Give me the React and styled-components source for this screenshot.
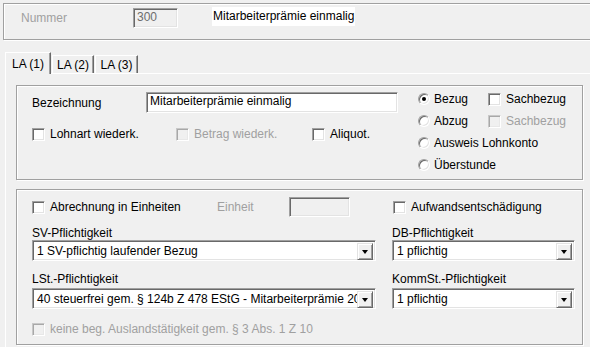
import React from "react";
import styled, { createGlobalStyle, css } from "styled-components";

const Global = createGlobalStyle`
  html, body { margin: 0; padding: 0; background: #f0f0f0; overflow: hidden; }
  body { font-family: "Liberation Sans", Arial, sans-serif; font-size: 12px; color: #000; }
`;

const sunken = css`
  border: 1px solid;
  border-color: #a0a0a0 #ffffff #ffffff #a0a0a0;
  box-shadow: inset 1px 1px 0 #696969, inset -1px -1px 0 #e3e3e3;
`;

const Page = styled.div`
  width: 590px;
  height: 347px;
  padding: 3px 0 0 3px;
  box-sizing: border-box;
  overflow: hidden;
`;

const Group = styled.div`
  box-sizing: border-box;
  border: 1px solid #a0a0a0;
  box-shadow: inset 1px 1px 0 #fff, 1px 1px 0 #fff;
  height: ${(p) => p.$h}px;
  width: ${(p) => (p.$w ? `${p.$w}px` : "auto")};
`;

const HeaderGroup = styled(Group)`
  margin-right: -20px;
  display: flex;
  align-items: flex-start;
  padding: 4px 0 0 17px;
`;

const Label = styled.span`
  display: inline-block;
  width: ${(p) => (p.$w ? `${p.$w}px` : "auto")};
  height: 20px;
  line-height: 20px;
  white-space: nowrap;
  color: ${(p) => (p.$disabled ? "#a0a0a0" : "#000")};
`;

const TextBox = styled.div`
  box-sizing: border-box;
  ${sunken};
  width: ${(p) => p.$w}px;
  height: ${(p) => p.$h}px;
  line-height: ${(p) => p.$h - 4}px;
  padding: 0 3px;
  background: ${(p) => (p.$disabled ? "#f0f0f0" : "#fff")};
  color: ${(p) => (p.$disabled ? "#6d6d6d" : "#000")};
  white-space: nowrap;
  overflow: hidden;
`;

const TitleText = styled.span`
  display: inline-block;
  margin: -1px 0 0 34px;
  height: 19px;
  line-height: 19px;
  padding: 0 1px;
  background: #fff;
  white-space: nowrap;
`;

const TabRow = styled.div`
  display: flex;
  align-items: flex-end;
  margin: 12px 0 0 2px;
  height: 21px;
`;

const Tab = styled.div`
  box-sizing: border-box;
  position: relative;
  z-index: ${(p) => (p.$active ? 2 : 1)};
  width: ${(p) => p.$w}px;
  height: ${(p) => (p.$active ? 22 : 18)}px;
  margin-bottom: ${(p) => (p.$active ? -1 : 0)}px;
  margin-right: 1px;
  background: #f0f0f0;
  border-top: 1px solid #fff;
  border-left: 1px solid #fff;
  border-right: 1px solid #696969;
  box-shadow: inset -1px 0 0 #a0a0a0;
  display: flex;
  justify-content: center;
  padding-top: ${(p) => (p.$active ? 4 : 2)}px;
  line-height: 14px;
`;

const Panel = styled.div`
  margin-left: 2px;
  border-top: 1px solid #fff;
  border-left: 1px solid #fff;
  padding: 11px 0 0 10px;
  height: 300px;
  display: flex;
  flex-direction: column;
  gap: 9px;
`;

const GroupInner = styled(Group)`
  display: flex;
  flex-direction: ${(p) => (p.$col ? "column" : "row")};
  padding-left: 15px;
`;

const LeftCol = styled.div`
  display: flex;
  flex-direction: column;
  padding-top: 6px;
`;

const Row = styled.div`
  display: flex;
  align-items: center;
  height: ${(p) => p.$h || 20}px;
  margin-top: ${(p) => p.$mt || 0}px;
`;

const RadioCol = styled.div`
  display: grid;
  grid-template-columns: 70px auto;
  grid-auto-rows: 22px;
  padding-top: 2px;
  margin-left: 20px;
`;

const Item = styled.label`
  display: flex;
  align-items: center;
  gap: ${(p) => (p.$radio ? 4 : 5)}px;
  width: ${(p) => (p.$w ? `${p.$w}px` : "auto")};
  margin-left: ${(p) => p.$ml || 0}px;
  white-space: nowrap;
  color: ${(p) => (p.$disabled ? "#a0a0a0" : "#000")};
  grid-column: ${(p) => (p.$span ? "1 / span 2" : "auto")};
`;

const Box = styled.span`
  box-sizing: border-box;
  width: 13px;
  height: 13px;
  flex: none;
  ${sunken};
  background: ${(p) => (p.$disabled ? "#f0f0f0" : "#fff")};
  ${(p) =>
    p.$disabled &&
    css`
      border-color: #c8c8c8 #fff #fff #c8c8c8;
      box-shadow: inset 1px 1px 0 #a8a8a8, inset -1px -1px 0 #e8e8e8;
    `}
`;

const Radio = styled.span`
  box-sizing: border-box;
  width: 12px;
  height: 12px;
  flex: none;
  border-radius: 50%;
  border: 1px solid;
  border-color: #a0a0a0 #fff #fff #a0a0a0;
  box-shadow: inset 1px 1px 0 #696969, inset -1px -1px 0 #e3e3e3;
  background: #fff;
  display: flex;
  align-items: center;
  justify-content: center;
  &::after {
    content: "";
    display: ${(p) => (p.$on ? "block" : "none")};
    width: 4px;
    height: 4px;
    border-radius: 50%;
    background: #000;
  }
`;

const FieldGrid = styled.div`
  display: grid;
  grid-template-columns: 344px 183px;
  column-gap: 16px;
`;

const FieldLabel = styled.div`
  height: 14px;
  line-height: 14px;
  margin-top: ${(p) => p.$mt || 0}px;
  white-space: nowrap;
`;

const Combo = styled.div`
  box-sizing: border-box;
  ${sunken};
  height: 21px;
  margin-top: ${(p) => p.$mt || 0}px;
  background: #fff;
  display: flex;
  padding: 2px;
`;

const ComboText = styled.div`
  flex: 1;
  min-width: 0;
  overflow: hidden;
  white-space: nowrap;
  line-height: 17px;
  padding-left: 2px;
`;

const ComboButton = styled.div`
  box-sizing: border-box;
  width: 16px;
  height: 17px;
  flex: none;
  background: #f0f0f0;
  border: 1px solid;
  border-color: #e3e3e3 #696969 #696969 #e3e3e3;
  box-shadow: inset 1px 1px 0 #fff, inset -1px -1px 0 #a0a0a0;
  display: flex;
  align-items: center;
  justify-content: center;
  &::after {
    content: "";
    width: 0;
    height: 0;
    border-left: 3.5px solid transparent;
    border-right: 3.5px solid transparent;
    border-top: 4px solid #000;
  }
`;

const Check = ({ children, disabled, w, ml }) => (
  <Item $disabled={disabled} $w={w} $ml={ml}>
    <Box $disabled={disabled} />
    {children}
  </Item>
);

const RadioItem = ({ children, on, span }) => (
  <Item $radio $span={span}>
    <Radio $on={on} />
    {children}
  </Item>
);

const Select = ({ value, mt }) => (
  <Combo $mt={mt}>
    <ComboText>{value}</ComboText>
    <ComboButton />
  </Combo>
);

export default function App() {
  return (
    <>
      <Global />
      <Page>
        <HeaderGroup $h={37}>
          <Label $w={112} $disabled>
            Nummer
          </Label>
          <TextBox $w={45} $h={20} $disabled>
            300
          </TextBox>
          <TitleText>Mitarbeiterprämie einmalig</TitleText>
        </HeaderGroup>

        <TabRow>
          <Tab $w={46} $active>
            LA (1)
          </Tab>
          <Tab $w={42}>LA (2)</Tab>
          <Tab $w={43}>LA (3)</Tab>
        </TabRow>

        <Panel>
          <GroupInner $h={95} $w={567}>
            <LeftCol>
              <Row $h={21}>
                <Label $w={114}>Bezeichnung</Label>
                <TextBox $w={252} $h={21}>
                  Mitarbeiterprämie einmalig
                </TextBox>
              </Row>
              <Row $h={14} $mt={14}>
                <Check w={144}>Lohnart wiederk.</Check>
                <Check w={136} disabled>
                  Betrag wiederk.
                </Check>
                <Check>Aliquot.</Check>
              </Row>
            </LeftCol>
            <RadioCol>
              <RadioItem on>Bezug</RadioItem>
              <Check>Sachbezug</Check>
              <RadioItem>Abzug</RadioItem>
              <Check disabled>Sachbezug</Check>
              <RadioItem span>Ausweis Lohnkonto</RadioItem>
              <RadioItem span>Überstunde</RadioItem>
            </RadioCol>
          </GroupInner>

          <GroupInner $h={156} $w={567} $col>
            <Row $h={20} $mt={7}>
              <Check w={185}>Abrechnung in Einheiten</Check>
              <Label $w={72} $disabled>
                Einheit
              </Label>
              <TextBox $w={61} $h={20} $disabled />
              <Check ml={43}>Aufwandsentschädigung</Check>
            </Row>
            <FieldGrid>
              <FieldLabel $mt={9}>SV-Pflichtigkeit</FieldLabel>
              <FieldLabel $mt={9}>DB-Pflichtigkeit</FieldLabel>
              <Select value="1 SV-pflichtig laufender Bezug" />
              <Select value="1 pflichtig" />
              <FieldLabel $mt={11}>LSt.-Pflichtigkeit</FieldLabel>
              <FieldLabel $mt={11}>KommSt.-Pflichtigkeit</FieldLabel>
              <Select
                mt={2}
                value="40 steuerfrei gem. § 124b Z 478 EStG - Mitarbeiterprämie 2025"
              />
              <Select mt={2} value="1 pflichtig" />
            </FieldGrid>
            <Row $h={14} $mt={13}>
              <Check disabled>keine beg. Auslandstätigkeit gem. § 3 Abs. 1 Z 10</Check>
            </Row>
          </GroupInner>
        </Panel>
      </Page>
    </>
  );
}
